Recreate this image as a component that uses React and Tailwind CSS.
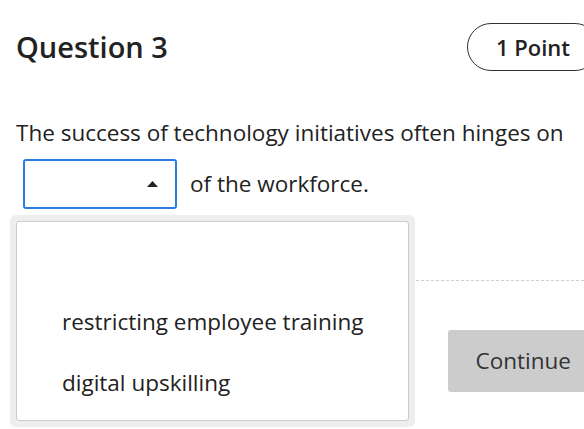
import React from 'react';

const options = ['', 'restricting employee training', 'digital upskilling'];

const App = () => {
  return (
    <div
      className="relative w-[584px] h-[429px] overflow-hidden bg-white text-[#222]"
      style={{ fontFamily: '"Open Sans", "Liberation Sans", sans-serif' }}
    >
      <div className="w-[599px] pl-4 pt-[23px]">
        <div className="flex items-center justify-between">
          <h1 className="text-[29px] font-semibold leading-[36px]">Question 3</h1>
          <div className="flex h-12 items-center rounded-full border border-[#333] px-7 text-[22px] font-semibold">
            1 Point
          </div>
        </div>

        <p className="mt-12 text-[22.5px] leading-[28px]">
          The success of technology initiatives often hinges on
        </p>

        <div className="mt-3 flex items-center gap-[13px]">
          <div className="ml-[7px] flex h-[50px] w-[154px] items-center justify-end rounded-[3px] border-2 border-[#2b7de3] pr-[17px]">
            <svg width="11" height="6" viewBox="0 0 11 6">
              <path d="M0 6 L5.5 0 L11 6 Z" fill="#222" />
            </svg>
          </div>
          <span className="text-[22.5px] leading-[28px]">of the workforce.</span>
        </div>

        <div className="mt-[71px] border-t border-dashed border-[#cfcfcf]" />

        <div className="mt-[49px] flex justify-end">
          <button className="h-[62px] rounded-[3px] bg-[#cccccc] px-7 text-[22.5px] text-[#333]">
            Continue
          </button>
        </div>
      </div>

      <div className="absolute left-[10px] top-[215px] w-[405px] rounded-md bg-[#eeeeee] p-[6px]">
        <div className="h-[200px] rounded-[3px] border border-[#cccccc] bg-white pt-2">
          {options.map((opt, i) => (
            <div key={i} className="flex h-[61px] items-center pl-[45px] text-[22.5px]">
              {opt}
            </div>
          ))}
        </div>
      </div>
    </div>
  );
};

export default App;
